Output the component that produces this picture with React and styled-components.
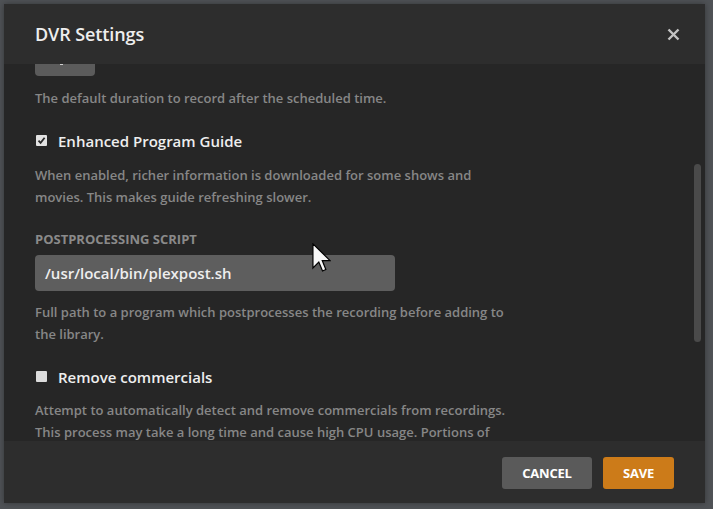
import React from "react";
import styled, { createGlobalStyle } from "styled-components";

const GlobalStyle = createGlobalStyle`
  html, body {
    margin: 0;
    padding: 0;
    background: #4f5256;
    font-family: "Open Sans", "Liberation Sans", sans-serif;
  }
`;

const Page = styled.div`
  width: 713px;
  height: 509px;
  padding: 4px 8px 6px 4px;
  box-sizing: border-box;
  position: relative;
`;

const Dialog = styled.div`
  width: 701px;
  height: 499px;
  display: flex;
  flex-direction: column;
  background: #262626;
  box-shadow: 0 0 6px rgba(0, 0, 0, 0.35);
`;

const Header = styled.div`
  height: 60px;
  flex: none;
  display: flex;
  align-items: center;
  justify-content: space-between;
  padding: 0 25px 0 31px;
  background: #2d2d2d;
`;

const Title = styled.h2`
  margin: 0;
  font-size: 18px;
  font-weight: 600;
  color: #eeeeee;
  letter-spacing: -0.1px;
`;

const CloseButton = styled.button`
  background: none;
  border: 0;
  padding: 0;
  width: 14px;
  height: 14px;
  display: flex;
  align-items: center;
  justify-content: center;
  cursor: pointer;
`;

const Body = styled.div`
  flex: 1;
  position: relative;
  overflow: hidden;
  padding: 0 31px;
  background: #262626;
`;

const Content = styled.div`
  width: 475px;
  display: flex;
  flex-direction: column;
`;

const ButtonStub = styled.div`
  width: 60px;
  height: 12px;
  background: #5b5b5b;
  border-radius: 0 0 4px 4px;
  position: relative;
  &::after {
    content: "";
    position: absolute;
    left: 25px;
    top: 0;
    width: 3px;
    height: 1px;
    background: #d0d0d0;
  }
`;

const Help = styled.p`
  margin: ${(p) => p.$top || 11}px 0 ${(p) => p.$bottom || 0}px;
  font-size: 13px;
  font-weight: 600;
  line-height: 22px;
  color: #878787;
`;

const CheckRow = styled.label`
  display: flex;
  align-items: center;
  height: 22px;
  margin-top: 21px;
  gap: 11px;
  padding-left: 1px;
`;

const Box = styled.span`
  width: 11px;
  height: 11px;
  border-radius: 1px;
  background: ${(p) => (p.$checked ? "#e2e2e2" : "#dcdcdc")};
  display: flex;
  align-items: center;
  justify-content: center;
  margin-top: -1px;
`;

const CheckLabel = styled.span`
  font-size: 15px;
  font-weight: 600;
  color: #eeeeee;
`;

const FieldLabel = styled.div`
  margin-top: 22px;
  font-size: 13px;
  font-weight: 700;
  line-height: 18px;
  text-transform: uppercase;
  color: #8a8a8a;
`;

const TextInput = styled.div`
  margin-top: 7px;
  width: 360px;
  height: 36px;
  box-sizing: border-box;
  padding: 0 10px;
  display: flex;
  align-items: center;
  background: #5e5e5e;
  border-radius: 4px;
  font-size: 15px;
  font-weight: 600;
  color: #eeeeee;
`;

const ScrollThumb = styled.div`
  position: absolute;
  right: 4px;
  top: 100px;
  width: 7px;
  height: 178px;
  border-radius: 4px;
  background: #4a4a4a;
`;

const Footer = styled.div`
  height: 61px;
  flex: none;
  display: flex;
  align-items: center;
  justify-content: flex-end;
  gap: 11px;
  padding: 1px 31px 0 0;
  background: #2d2d2d;
`;

const ActionButton = styled.button`
  height: 32px;
  min-width: ${(p) => p.$width}px;
  border: 0;
  border-radius: 3px;
  background: ${(p) => (p.$primary ? "#cc7b19" : "#5a5a5a")};
  color: #ffffff;
  font-family: "Open Sans", "Liberation Sans", sans-serif;
  font-size: 13px;
  font-weight: 700;
  text-transform: uppercase;
  letter-spacing: -0.2px;
  cursor: pointer;
`;

const Pointer = styled.svg`
  position: absolute;
  left: 312px;
  top: 243px;
  pointer-events: none;
`;

function Checkbox({ checked }) {
  return (
    <Box $checked={checked}>
      {checked && (
        <svg width="9" height="9" viewBox="0 0 9 9">
          <path d="M1.5 4.6 L3.6 6.8 L7.6 1.8" fill="none" stroke="#2a2a2a" strokeWidth="1.8" />
        </svg>
      )}
    </Box>
  );
}

export default function App() {
  return (
    <>
      <GlobalStyle />
      <Page>
        <Dialog>
          <Header>
            <Title>DVR Settings</Title>
            <CloseButton aria-label="Close">
              <svg width="13" height="13" viewBox="0 0 13 13">
                <path d="M1.5 1.5 L11.5 11.5 M11.5 1.5 L1.5 11.5" stroke="#c4c4c4" strokeWidth="2.4" />
              </svg>
            </CloseButton>
          </Header>
          <Body>
            <Content>
              <ButtonStub />
              <Help>The default duration to record after the scheduled time.</Help>

              <CheckRow>
                <Checkbox checked />
                <CheckLabel>Enhanced Program Guide</CheckLabel>
              </CheckRow>
              <Help $top={12}>
                When enabled, richer information is downloaded for some shows and movies. This makes guide
                refreshing slower.
              </Help>

              <FieldLabel>Postprocessing Script</FieldLabel>
              <TextInput>/usr/local/bin/plexpost.sh</TextInput>
              <Help $top={10}>
                Full path to a program which postprocesses the recording before adding to the library.
              </Help>

              <CheckRow>
                <Checkbox />
                <CheckLabel>Remove commercials</CheckLabel>
              </CheckRow>
              <Help>
                Attempt to automatically detect and remove commercials from recordings. This process may take a
                long time and cause high CPU usage. Portions of commercials may remain in the recording.
              </Help>
            </Content>
            <ScrollThumb />
          </Body>
          <Footer>
            <ActionButton $width={90}>Cancel</ActionButton>
            <ActionButton $width={71} $primary>
              Save
            </ActionButton>
          </Footer>
        </Dialog>
        <Pointer width="19" height="29" viewBox="0 0 12.6 19.3">
          <path
            d="M0.6 0.6 L0.6 16.6 L4.5 12.7 L7 18.6 L9.2 17.6 L6.8 11.7 L12 11.7 Z"
            fill="#f7f7f7"
            stroke="#000000"
            strokeWidth="0.8"
            strokeLinejoin="miter"
          />
        </Pointer>
      </Page>
    </>
  );
}
